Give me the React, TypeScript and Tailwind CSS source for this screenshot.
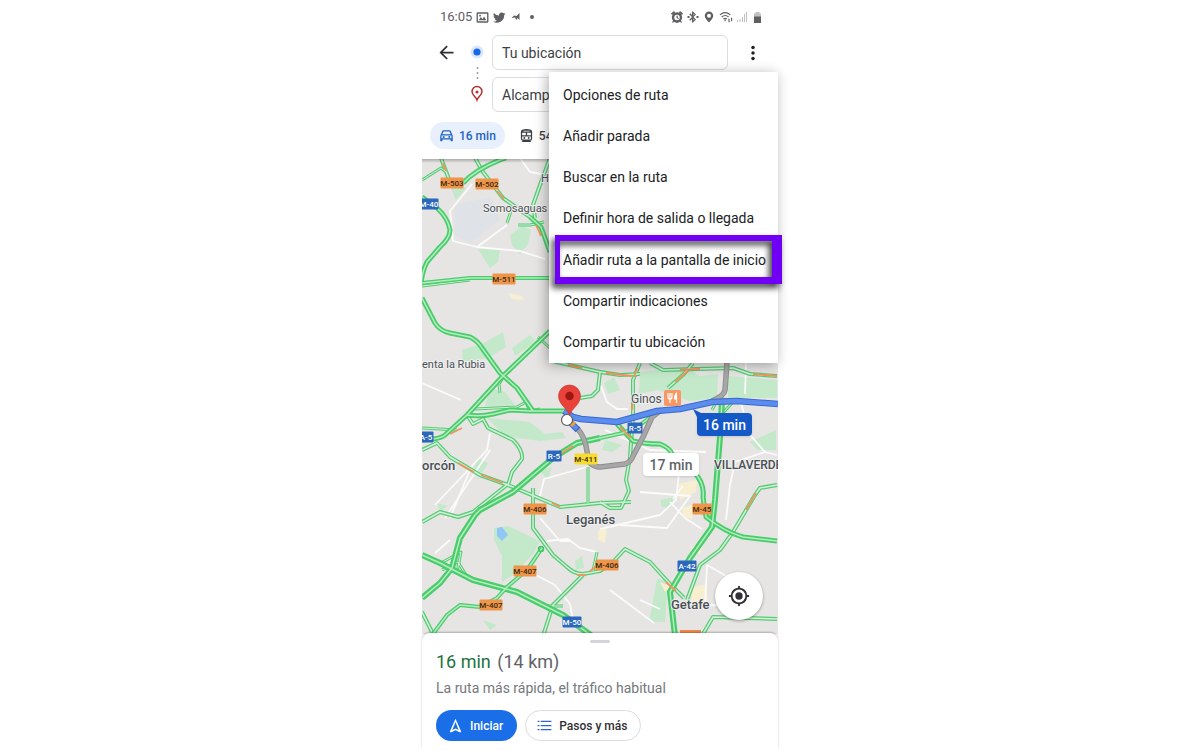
import type { ReactNode } from "react";

type Road = { d: string; w: number };

const majorRoads: Road[] = [
  { d: "M422 197L437 208Q448 218 450 230Q450 238 440 247L427 262Q422 272 421 284", w: 5 },
  { d: "M463 183Q475 170 500 160L506 158", w: 5 },
  { d: "M422 283L470 278L552 278", w: 4 },
  { d: "M422 298L435 323Q440 331 450 333L470 337Q478 341 482 348L500 373L517 388L533 411", w: 5 },
  { d: "M550 331L502 377L467 415L445 435Q441 439 422 440", w: 5 },
  { d: "M467 415Q480 417 493 414L510 410L530 411L566 411", w: 5 },
  { d: "M600 438L577 443L553 458L513 492L480 510L475 515L460 538L452 568L440 583L422 598", w: 6 },
  { d: "M422 555L440 563L473 580L517 592L563 615L592 636", w: 6 },
  { d: "M600 438L623 433L640 425L657 412", w: 4 },
  { d: "M617 424L633 441Q645 444 660 444Q670 448 672 454L694 472Q705 484 703 497L706 517Q725 532 743 537L777 541", w: 5 },
  { d: "M722 400L720 437L715 500L712 527L690 558L670 592L675 636", w: 6 },
  { d: "M542 548L527 570L507 587L497 598L480 607L460 605L447 615L433 634", w: 4 },
  { d: "M530 217L541 227L550 252", w: 5 },
];

const minorRoads: Road[] = [
  { d: "M441 158L450 182", w: 4 },
  { d: "M422 180L441 168L446 172", w: 3 },
  { d: "M475 158L483 172L503 198L530 217", w: 4 },
  { d: "M550 158L540 185L533 205L535 218", w: 4 },
  { d: "M512 208L507 223", w: 3 },
  { d: "M518 225L530 225L544 222", w: 3 },
  { d: "M422 286L470 280", w: 3 },
  { d: "M538 337L552 350", w: 3 },
  { d: "M552 361L600 372L598 390L592 396L580 398", w: 4 },
  { d: "M600 372L620 375L640 374", w: 4 },
  { d: "M475 409L517 407L526 402", w: 3 },
  { d: "M522 394L530 411L540 409", w: 3 },
  { d: "M504 376L499 384L500 393", w: 3 },
  { d: "M467 415L473 424L483 419L488 428L513 440Q523 450 522 459L512 472L508 485", w: 4 },
  { d: "M422 428L457 430", w: 3 },
  { d: "M422 450L437 443L450 457L480 475L508 485L560 507L600 503L631 502", w: 4 },
  { d: "M508 484L473 512L458 517L440 512L422 522", w: 4 },
  { d: "M588 467L588 503", w: 3 },
  { d: "M533 488L533 528L553 555L567 567Q574 574 583 574L600 571L612 563L625 549L650 562L670 584L684 598", w: 4 },
  { d: "M583 575L553 605L543 636", w: 4 },
  { d: "M548 606L563 606", w: 3 },
  { d: "M597 552L593 571", w: 3 },
  { d: "M422 612L432 632", w: 4 },
  { d: "M640 363L633 380L633 417L630 457L626 480L629 491L621 508L610 508L600 502", w: 4 },
  { d: "M650 363L663 370L733 368L750 374L777 376", w: 4 },
  { d: "M693 363L684 374L668 388", w: 4 },
  { d: "M777 485L760 488L755 495L733 532L720 550L700 565L687 600", w: 4 },
  { d: "M777 619L713 617L703 634", w: 4 },
  { d: "M703 490L704 513L715 523", w: 4 },
  { d: "M441 563L461 552L457 573", w: 3 },
  { d: "M442 570L458 562L469 580", w: 3 },
  { d: "M712 410L718 399L735 400L722 414", w: 3 },
];

const trafficRoads = [
  "M443 163L446 171", "M497 191L504 199", "M536 225L541 236", "M568 365L582 368",
  "M458 463L474 472", "M481 475L503 483", "M552 503L560 507", "M560 454L573 446",
  "M620 427L631 438", "M637 368L634 377", "M633 397L632 410", "M688 371L675 382",
  "M753 374L777 376", "M450 434L462 428", "M577 575L586 575", "M590 571L598 565",
  "M666 582L676 591", "M756 493L746 510", "M606 373L632 376", "M680 370L700 369",
];

const streets = [
  "M472 184L450 211L453 241L477 247L507 225", "M520 158L530 172L548 175", "M477 247L520 251L545 259",
  "M490 433L487 450L435 505", "M490 450L445 518", "M540 496L544 479L587 467", "M540 518L560 541L570 541",
  "M547 541L568 539L580 548L597 552", "M532 573L555 585L570 604L573 620",
  "M601 386L607 402L617 409L628 409", "M680 464L676 500L660 515L600 529", "M640 492L690 496L667 528L620 525",
  "M670 502L685 518L702 529", "M683 486L673 499", "M746 363L745 394", "M741 403L750 435L765 452L777 455",
  "M765 452L735 462L730 485L726 520", "M707 565L705 606L725 604", "M707 565L728 577",
  "M450 540L435 553", "M610 590L654 623", "M422 383L461 400", "M605 430L650 450L706 452",
  "M430 440L470 470L450 518", "M640 600L660 609",
];

const shields: { x: number; y: number; t: string; k: "o" | "b" | "y" }[] = [
  { x: 452, y: 183, t: "M-503", k: "o" },
  { x: 487, y: 184, t: "M-502", k: "o" },
  { x: 429, y: 204, t: "M-40", k: "b" },
  { x: 504, y: 279, t: "M-511", k: "o" },
  { x: 426, y: 437, t: "A-5", k: "b" },
  { x: 554, y: 456, t: "R-5", k: "b" },
  { x: 586, y: 459, t: "M-411", k: "y" },
  { x: 635, y: 428, t: "R-5", k: "b" },
  { x: 535, y: 509, t: "M-406", k: "o" },
  { x: 702, y: 509, t: "M-45", k: "o" },
  { x: 525, y: 571, t: "M-407", k: "o" },
  { x: 607, y: 565, t: "M-406", k: "o" },
  { x: 687, y: 566, t: "A-42", k: "b" },
  { x: 491, y: 605, t: "M-407", k: "o" },
  { x: 572, y: 622, t: "M-50", k: "b" },
];

const shieldFill = { o: "#ee9549", b: "#2b68bd", y: "#f7dc2f" };

const places = [
  { x: 483, y: 212, t: "Somosaguas", s: 11, w: 400 },
  { x: 541, y: 182, t: "H", s: 11, w: 400 },
  { x: 422, y: 368, t: "enta la Rubia", s: 11, w: 400 },
  { x: 422, y: 470, t: "orcón", s: 13, w: 500 },
  { x: 631, y: 403, t: "Ginos", s: 12, w: 400 },
  { x: 714, y: 469, t: "VILLAVERDE", s: 12, w: 500 },
  { x: 566, y: 524, t: "Leganés", s: 13, w: 500 },
  { x: 671, y: 609, t: "Getafe", s: 13, w: 500 },
];

function CityMap() {
  return (
    <svg
      viewBox="422 159 356 475"
      preserveAspectRatio="xMidYMid slice"
      className="block h-full w-full"
      aria-label="Mapa de la ruta"
      role="img"
      fill="none"
      strokeLinejoin="round"
    >
      <rect x="400" y="140" width="400" height="520" fill="#e6e5e4" />
      <g fill="#dfe2e7">
        <path d="M455 205L490 197L500 220L470 243L455 235Z" />
      </g>
      <g fill="#c3e8ca">
        <path d="M450 186L466 188L456 200Z" />
        <path d="M510 235L522 226L531 230L528 244L520 254L512 245Z" />
        <path d="M478 249L500 250L498 262L490 268Z" />
        <path d="M462 350L484 343L503 332L506 347L488 358L463 362Z" />
        <path d="M512 348L530 335L536 342L515 356Z" />
        <path d="M490 388L505 392L515 405L485 406Z" />
        <path d="M487 418L530 422L545 434L562 432L566 438L540 441L505 436Z" />
        <path d="M478 458L488 463L482 473L474 468Z" />
        <path d="M494 528L508 526L540 541L534 553L514 574L502 582L502 556L494 540Z" />
        <path d="M657 579L668 580L665 622L649 622Z" />
        <path d="M640 372L684 367L700 376L718 374L717 398L690 401L657 390L639 394Z" />
        <path d="M660 383L690 377L705 387L690 399Z" />
        <path d="M728 376L777 380L777 398L728 398Z" />
        <path d="M605 440L622 445L612 452L602 450Z" />
        <path d="M660 500L675 497L670 508L662 507Z" />
        <path d="M575 561L582 556L584 568L576 570Z" />
        <path d="M604 383L614 377L620 390L608 394Z" />
        <path d="M750 442L776 430L776 450L758 450Z" />
        <path d="M540 471L552 467L548 480Z" />
        <path d="M437 503L447 506L440 512Z" />
        <path d="M483 620L497 625L490 630Z" />
      </g>
      <g fill="#f7efd0">
        <path d="M508 293L522 296L524 300L512 299Z" />
        <path d="M598 531L607 526L605 543L598 540Z" />
        <path d="M678 484L697 480L696 492L680 500Z" />
        <path d="M682 508L695 504L692 519L683 516Z" />
        <path d="M690 548L704 540L700 554Z" />
        <path d="M660 582L671 586L665 592Z" />
        <path d="M690 588L706 584L708 600L692 604Z" />
      </g>
      <path d="M497 528L502 527L508 535L502 541L497 536Z" fill="#8fc7f7" />

      <g stroke="#fbfbfb" strokeWidth="1.8">
        {streets.map((d) => <path key={d} d={d} />)}
      </g>
      {minorRoads.map((r) => <path key={r.d} d={r.d} stroke="#55cb73" strokeWidth={r.w} />)}
      {minorRoads.map((r) => <path key={r.d} d={r.d} stroke="#d5f0da" strokeWidth={r.w > 3 ? 1.5 : 1} />)}
      {majorRoads.map((r) => <path key={r.d} d={r.d} stroke="#48cd6a" strokeWidth={r.w} />)}
      {majorRoads.map((r) => <path key={r.d} d={r.d} stroke="#b4ecc0" strokeWidth="1.5" />)}
      <g stroke="#f3935c" strokeWidth="1.800">
        {trafficRoads.map((d) => <path key={d} d={d} />)}
      </g>
      <circle cx="541" cy="549" r="2.5" stroke="#43c565" strokeWidth="1.5" />

      <g stroke="#8e8e8e" strokeWidth="5.5">
        <path d="M577 428Q584 436 586 446L589 462Q594 467 600 467L625 464Q631 462 633 456L643 437L652 417L661 410" />
        <path d="M727 363L725 390Q724 396 712 401" />
      </g>
      <g stroke="#a7a7a7" strokeWidth="3.5">
        <path d="M577 428Q584 436 586 446L589 462Q594 467 600 467L625 464Q631 462 633 456L643 437L652 417L661 410" />
        <path d="M727 363L725 390Q724 396 712 401" />
      </g>
      <path d="M566 418L578 430" stroke="#3a68cf" strokeWidth="6.5" />
      <path d="M566 418L577 429" stroke="#5b8def" strokeWidth="4" />
      <path d="M571 426L575 422" stroke="#f0a335" strokeWidth="3" />
      <path d="M564 411L573 417L581 419L617 422L657 411L680 409L712 402L737 401L778 404" stroke="#3a68cf" strokeWidth="6.5" />
      <path d="M564 411L573 417L581 419L617 422L657 411L680 409L712 402L737 401L778 404" stroke="#5b8def" strokeWidth="4.5" />

      <rect x="680" y="630" width="21" height="8" fill="#f08a4b" />
      {shields.map((s) => {
        const width = s.t.length * 4 + 3;
        return (
          <g key={`${s.t}-${s.x}`}>
            <rect x={s.x - width / 2} y={s.y - 5.5} width={width} height="11" rx="1" fill={shieldFill[s.k]} />
            <text
              x={s.x}
              y={s.y + 3}
              fontSize="8"
              fontWeight="500"
              textAnchor="middle"
              fill={s.k === "b" ? "#ffffff" : "#3b2a16"}
            >
              {s.t}
            </text>
          </g>
        );
      })}
      <g fill="#4b4f54" stroke="#f0f0f0" strokeWidth="2" paintOrder="stroke">
        {places.map((p) => (
          <text key={p.t} x={p.x} y={p.y} fontSize={p.s} fontWeight={p.w}>{p.t}</text>
        ))}
      </g>

      <rect x="664" y="390" width="17" height="16" rx="2" fill="#f79763" />
      <g stroke="#fff" strokeWidth="1.2">
        <path d="M668 393V397Q668 399 670 399Q672 399 672 397V393M670 393V403" />
        <path d="M676.5 403V393Q674.5 395 674.5 399H676.5" fill="#fff" />
      </g>

      <path
        d="M569.5 416C568.5 409 558.5 405 558.5 396A11 11 0 0 1 580.5 396C580.5 405 570.5 409 569.5 416Z"
        fill="#e8423a"
        stroke="#c5352d"
        strokeWidth="0.6"
      />
      <circle cx="569.5" cy="396" r="4.2" fill="#9c1712" />
      <circle cx="567" cy="420" r="5.5" fill="#fff" stroke="#5c5c5c" strokeWidth="1.2" />
    </svg>
  );
}

function Icon({ className, children }: { className: string; children: ReactNode }) {
  return (
    <svg viewBox="0 0 24 24" className={className} fill="currentColor" aria-hidden="true">
      {children}
    </svg>
  );
}

function StatusBar() {
  return (
    <div className="flex h-[34px] items-center justify-between pr-4 pl-[18px] text-[#5f6063]">
      <div className="flex items-center gap-1">
        <span className="text-[13px] leading-4">16:05</span>
        <Icon className="size-[13px]">
          <path d="M3 2.500h18a2 2 0 0 1 2 2v15a2 2 0 0 1-2 2H3a2 2 0 0 1-2-2v-15a2 2 0 0 1 2-2Zm.5 2.500v14h17V5Zm1.500 12 4-6 3 4 3-5 4 7ZM6 7h3v3H6Z" fillRule="evenodd" />
        </Icon>
        <Icon className="size-[13px]">
          <path d="M23 4.900a9 9 0 0 1-2.700.8 4.700 4.700 0 0 0 2-2.600 9 9 0 0 1-3 1.100 4.700 4.700 0 0 0-8 4.300A13.400 13.400 0 0 1 1.700 3.600a4.700 4.700 0 0 0 1.400 6.300 5 5 0 0 1-2.100-.6 4.700 4.700 0 0 0 3.800 4.700 5 5 0 0 1-2.100.1 4.700 4.700 0 0 0 4.400 3.300A9.500 9.500 0 0 1 0 19.500 13.400 13.400 0 0 0 20.600 7.500 9 9 0 0 0 23 4.900Z" />
        </Icon>
        <Icon className="size-3">
          <path d="M19 4v14l-4-4-2 4-3-5-7 1 5-5 5 1Z" />
        </Icon>
        <span className="ml-1 size-1 rounded-full bg-current" />
      </div>
      <div className="flex items-center gap-1">
        <Icon className="size-3">
          <path fillRule="evenodd" d="M6 0 0 5l2 3 6-5Zm12 0-2 3 6 5 2-3ZM12 2.500a10.500 10.500 0 0 1 8 17l2 3-2 1-2-2a10 10 0 0 1-12 0l-2 2-2-1 2-3a10.500 10.500 0 0 1 8-17Zm0 5a5.500 5.500 0 1 0 0 11 5.500 5.500 0 0 0 0-11Zm-1 2h2.500v3l2 2-1 1.500-3.500-2.500Z" />
        </Icon>
        <Icon className="size-3">
          <path d="m18 7-6-6h-2v7L6.400 4.400 4.500 6.300 10 12l-5.500 5.700 1.900 1.900L10 16v7h2l6-6-5-5Zm-5-2 2 2-2 2Zm2 12-2 2v-4ZM1 10h4v4H1Zm18 0h4v4h-4Z" />
        </Icon>
        <Icon className="size-3">
          <path fillRule="evenodd" d="M12 1a8.500 8.500 0 0 0-8.500 8.500C3.500 15 12 23 12 23s8.500-8 8.500-13.500A8.500 8.500 0 0 0 12 1Zm0 4.500a4 4 0 1 1 0 8 4 4 0 0 1 0-8Z" />
        </Icon>
        <svg viewBox="0 0 16 14" className="h-3 w-3.5" fill="none" stroke="currentColor" strokeWidth="1.4" aria-hidden="true">
          <path d="M1 4.500Q7-.5 13 4.500M3 7Q7 3.500 11 7M5 9.500Q7 7.500 9 9.500" />
          <path d="M7 10v2M11.500 9v4M14.500 8v4" />
        </svg>
        <svg viewBox="0 0 10 10" className="size-2.5 text-[#c0c0c0]" fill="currentColor" aria-hidden="true">
          <path d="M0 8h1v2H0ZM2.500 7h1v3h-1ZM5 5h1v5H5ZM7 2h1v8H7ZM9 0h1v10H9Z" />
        </svg>
        <svg viewBox="0 0 9 11" className="ml-0.5 h-[11px] w-[9px]" aria-hidden="true">
          <path d="M2.500 0h4v1.500H8V5H1V1.500h1.500Z" fill="#c0c0c0" />
          <path d="M1 4.500h7V11H1Z" fill="#5f5f5f" />
        </svg>
      </div>
    </div>
  );
}

const menuItems = [
  "Opciones de ruta",
  "Añadir parada",
  "Buscar en la ruta",
  "Definir hora de salida o llegada",
  "Añadir ruta a la pantalla de inicio",
  "Compartir indicaciones",
  "Compartir tu ubicación",
];

function RouteMenu() {
  return (
    <div className="absolute top-[72px] right-0 z-20 w-[229px] bg-white pt-0.5 shadow-[-2px_2px_12px_rgba(0,0,0,0.32)]">
      <ul className="grid h-[289px] grid-rows-7">
        {menuItems.map((item, i) => (
          <li key={item} className="relative flex">
            <button type="button" className="w-full pl-3.5 text-left text-sm whitespace-nowrap text-[#202124]">
              {item}
            </button>
            {i === 4 && (
              <span className="pointer-events-none absolute -inset-y-1 -right-1 left-1.5 border-t-6 border-r-10 border-b-7 border-l-5 border-[#6f00f5] drop-shadow-[-3px_4px_3px_rgba(0,0,0,0.75)]" />
            )}
          </li>
        ))}
      </ul>
    </div>
  );
}

function RouteHeader() {
  return (
    <header>
      <StatusBar />
      <div className="flex pt-px">
        <button type="button" aria-label="Atrás" className="flex h-[35px] w-12 items-center justify-center">
          <Icon className="size-[21px] text-[#303134]">
            <path d="M20 11H7.800l5.600-5.600L12 4l-8 8 8 8 1.400-1.400L7.800 13H20Z" />
          </Icon>
        </button>
        <svg viewBox="0 0 14 76" className="h-[76px] w-3.5" aria-hidden="true">
          <circle cx="7" cy="17" r="6.500" fill="#d9e6fd" />
          <circle cx="7" cy="17" r="3.600" fill="#1668e8" />
          <g fill="#9a9a9a">
            <circle cx="7.500" cy="33" r="1" />
            <circle cx="7.500" cy="38" r="1" />
            <circle cx="7.500" cy="43" r="1" />
          </g>
          <path d="M7 65C6 62 2 60 2 56.500A5 5 0 0 1 12 56.500C12 60 8 62 7 65Z" fill="none" stroke="#b5302d" strokeWidth="1.500" />
          <circle cx="7" cy="57" r="1.500" fill="#b5302d" />
        </svg>
        <div className="flex min-w-0 flex-1 flex-col gap-[7px] pl-2">
          <input
            aria-label="Origen"
            defaultValue="Tu ubicación"
            className="h-[35px] w-full rounded-md border border-[#dadce0] bg-white px-[9px] pt-px text-sm text-[#3c4043] outline-none"
          />
          <input
            aria-label="Destino"
            defaultValue="Alcampo"
            className="h-[35px] w-full rounded-md border border-[#dadce0] bg-white px-[9px] text-sm text-[#3c4043] outline-none"
          />
        </div>
        <button type="button" aria-label="Más opciones" className="flex h-[35px] w-[50px] items-center justify-center">
          <Icon className="size-5 text-[#202124]">
            <circle cx="12" cy="5.500" r="2.100" />
            <circle cx="12" cy="12" r="2.100" />
            <circle cx="12" cy="18.500" r="2.100" />
          </Icon>
        </button>
      </div>
      <div className="flex items-center gap-3.5 px-2 py-[10px] text-xs font-medium">
        <button type="button" className="flex h-[27px] items-center gap-[5px] rounded-full bg-[#e8f0fd] px-[9px] text-[#1f62c4]">
          <Icon className="size-[15px]">
            <path fillRule="evenodd" d="M18.900 5A2 2 0 0 0 17 3.500H7A2 2 0 0 0 5.100 5L2 12.500V20c0 .6.400 1 1 1h1.500c.6 0 1-.4 1-1v-1.500h13V20c0 .6.400 1 1 1H21c.6 0 1-.4 1-1v-7.500ZM7.200 5.500h9.600L18.600 10H5.400ZM4 12h16v4.500H4Z" />
            <circle cx="7.500" cy="14.200" r="1.600" />
            <circle cx="16.500" cy="14.200" r="1.600" />
          </Icon>
          16 min
        </button>
        <button type="button" aria-label="Transporte público" className="flex h-[27px] items-center gap-[5px] text-[#3c4043]">
          <Icon className="size-[15px]">
            <path fillRule="evenodd" d="M12 1.500C6 1.500 3 2.500 3 6.500V17a3.500 3.500 0 0 0 3 3.500L4.500 22v.5h15V22L18 20.500a3.500 3.500 0 0 0 3-3.500V6.500c0-4-3-5-9-5ZM7 4.500h10v1.200H7Zm-2 3h6v4H5Zm8 0h6v4h-6ZM5 13.500h14V17a1.500 1.500 0 0 1-1.500 1.500h-11A1.500 1.500 0 0 1 5 17Z" />
            <circle cx="8.500" cy="16" r="1.500" />
            <circle cx="15.500" cy="16" r="1.500" />
          </Icon>
          54
        </button>
      </div>
    </header>
  );
}

export default function App() {
  return (
    <div className="min-h-screen overflow-x-hidden bg-white font-['Roboto',sans-serif]">
      <main className="relative mx-auto flex w-full max-w-[356px] flex-col">
        <RouteHeader />
        <RouteMenu />

        <section className="relative h-[475px] overflow-hidden">
          <CityMap />
          <div className="pointer-events-none absolute inset-x-0 top-0 h-1 bg-linear-to-b from-black/25 to-transparent" />
          <button type="button" className="absolute top-[254px] left-[275px] h-[23px] w-[55px] rounded bg-[#1459c7] text-sm font-medium text-white shadow">
            <svg viewBox="0 0 8 8" className="absolute -top-1 -left-1 size-2" aria-hidden="true">
              <path d="M0 0L8 4L4 8Z" fill="#1459c7" />
            </svg>
            16 min
          </button>
          <button type="button" className="absolute top-[294px] left-[221px] h-[23px] w-14 rounded bg-white text-sm font-medium text-[#5f6368] shadow">
            17 min
          </button>
          <button
            type="button"
            aria-label="Centrar en mi ubicación"
            className="absolute right-[15px] bottom-[14px] flex size-12 items-center justify-center rounded-full bg-white shadow-[0_1px_3px_rgba(0,0,0,0.35)]"
          >
            <Icon className="size-[22px] text-[#303134]">
              <path fillRule="evenodd" d="M11 1h2v2.100A9 9 0 0 1 20.900 11H23v2h-2.100A9 9 0 0 1 13 20.900V23h-2v-2.100A9 9 0 0 1 3.100 13H1v-2h2.100A9 9 0 0 1 11 3.100Zm1 4a7 7 0 1 0 0 14 7 7 0 0 0 0-14Z" />
              <circle cx="12" cy="12" r="4" />
            </Icon>
          </button>
        </section>

        <section className="relative -mt-px flex flex-col rounded-t-lg bg-white px-3.5 pt-[7px] pb-2 shadow-[0_-1px_2px_rgba(0,0,0,0.25)]">
          <span className="h-[3px] w-5 self-center rounded-full bg-[#d3d5d8]" />
          <h1 className="mt-[7px] text-lg leading-6 text-[#5f6368]">
            <span className="mr-0.5 text-[#1a7340]">16 min</span> (14 km)
          </h1>
          <p className="mt-1 text-sm leading-5 text-[#75787c]">La ruta más rápida, el tráfico habitual</p>
          <div className="mt-3 flex gap-2 text-xs font-medium">
            <button type="button" className="flex h-[31px] items-center gap-[7px] rounded-full bg-[#1a6fe8] pr-3.5 pl-3 text-white">
              <Icon className="size-[15px]">
                <path fillRule="evenodd" d="M12 1 3 21.500 4.500 23l7.500-3.500 7.500 3.500 1.500-1.500Zm0 5.500 5 12.500-5-2.400L7 19Z" />
              </Icon>
              Iniciar
            </button>
            <button type="button" className="flex h-[31px] items-center gap-[7px] rounded-full border border-[#dadce0] bg-white pr-[13px] pl-[11px] text-[#303134]">
              <Icon className="size-[15px] text-[#2f66c8]">
                <path d="M1 4.500h3v2H1Zm5 0h17v2H6ZM1 11h3v2H1Zm5 0h17v2H6ZM1 17.500h3v2H1Zm5 0h17v2H6Z" />
              </Icon>
              Pasos y más
            </button>
          </div>
        </section>
      </main>
    </div>
  );
}
